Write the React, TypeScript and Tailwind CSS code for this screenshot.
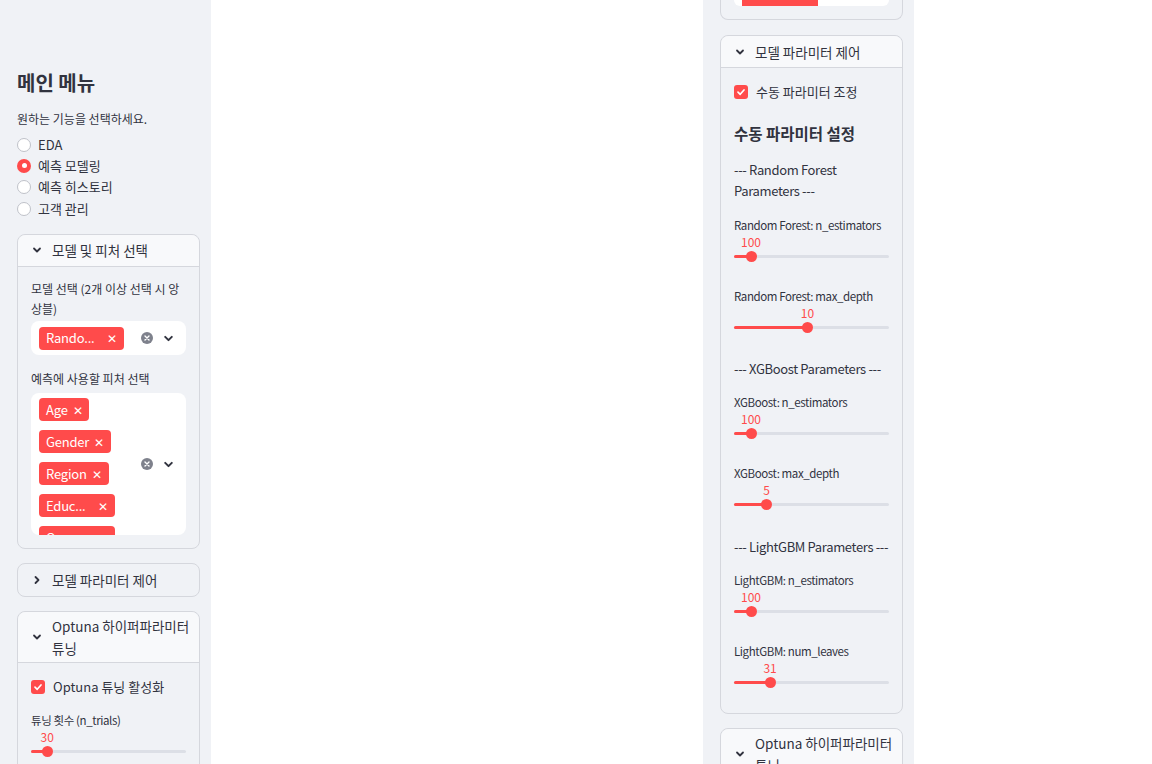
import React from 'react';

const ChevronDown = ({ size = 10 }: { size?: number }) => (
  <svg width={size} height={size} viewBox="0 0 10 10" fill="none">
    <path d="M2 3.5 L5 6.5 L8 3.5" stroke="#31333f" strokeWidth="1.8" strokeLinecap="round" strokeLinejoin="round" />
  </svg>
);

const ChevronRight = () => (
  <svg width={10} height={10} viewBox="0 0 10 10" fill="none">
    <path d="M3.5 2 L6.5 5 L3.5 8" stroke="#31333f" strokeWidth="1.8" strokeLinecap="round" strokeLinejoin="round" />
  </svg>
);

const ClearIcon = () => (
  <svg width={12} height={12} viewBox="0 0 12 12">
    <circle cx="6" cy="6" r="6" fill="#7e818c" />
    <path d="M4 4 L8 8 M8 4 L4 8" stroke="#fff" strokeWidth="1.4" strokeLinecap="round" />
  </svg>
);

const CheckBox = ({ label }: { label: string }) => (
  <div className="flex h-[22px] items-center gap-[8px]">
    <div className="flex h-[14px] w-[14px] items-center justify-center rounded-[3px] bg-[#ff4b4b]">
      <svg width={10} height={10} viewBox="0 0 10 10" fill="none">
        <path d="M2 5.2 L4.2 7.3 L8 3" stroke="#fff" strokeWidth="1.7" strokeLinecap="round" strokeLinejoin="round" />
      </svg>
    </div>
    <span className="text-[13px] leading-[22px]">{label}</span>
  </div>
);

const Tag = ({ text, w }: { text: string; w?: string }) => (
  <div className={`flex h-[23px] shrink-0 items-center justify-between gap-[5px] rounded-[4px] bg-[#ff4b4b] px-[7px] text-[13px] tracking-[-0.2px] text-white ${w ?? ''}`}>
    <span>{text}</span>
    <span className="text-[12px]">✕</span>
  </div>
);

const Slider = ({ label, value, pct }: { label: string; value: number; pct: number }) => (
  <div>
    <div className="whitespace-nowrap text-[11.5px] leading-[18px] tracking-[-0.4px]">{label}</div>
    <div className="relative h-[30px]">
      <span
        className="absolute top-[1px] -translate-x-1/2 text-[12px] leading-[14px] text-[#ff4b4b]"
        style={{ left: `${pct}%` }}
      >
        {value}
      </span>
      <div className="absolute left-0 right-0 top-[21px] h-[3px] rounded-full bg-[#dcdfe6]">
        <div className="h-full rounded-full bg-[#ff4b4b]" style={{ width: `${pct}%` }} />
      </div>
      <div
        className="absolute top-[17px] -ml-[5.5px] h-[11px] w-[11px] rounded-full bg-[#ff4b4b]"
        style={{ left: `${pct}%` }}
      />
    </div>
  </div>
);

const Expander = ({
  title,
  open,
  children,
  className = '',
}: {
  title: React.ReactNode;
  open: boolean;
  children?: React.ReactNode;
  className?: string;
}) => (
  <div className={`w-[183px] rounded-lg border border-[#d5d7dd] ${className}`}>
    <div
      className={`flex min-h-[32px] items-center gap-[10px] py-[3px] pl-[14px] pr-[8px] ${
        open ? 'rounded-t-lg border-b border-[#d5d7dd] bg-[#f8f9fb]' : ''
      }`}
    >
      <div className="shrink-0">{open ? <ChevronDown /> : <ChevronRight />}</div>
      <div className="break-keep text-[13.5px] leading-[22px]">{title}</div>
    </div>
    {open && children}
  </div>
);

const Section = ({ text, className = '' }: { text: string; className?: string }) => (
  <p className={`text-[13px] leading-[21px] tracking-[-0.35px] ${className}`}>{text}</p>
);

const LeftSidebar = () => (
  <div className="h-[764px] w-[211px] shrink-0 overflow-hidden bg-[#f0f2f6] pl-[17px] pt-[69px]">
    <h1 className="text-[20px] font-bold leading-[28px]">메인 메뉴</h1>
    <p className="mt-[13px] text-[12px] leading-[18px]">원하는 기능을 선택하세요.</p>
    <div className="mt-[6px] flex flex-col">
      {['EDA', '예측 모델링', '예측 히스토리', '고객 관리'].map((o, i) => (
        <div key={o} className="flex h-[21.3px] items-center gap-[7px]">
          {i === 1 ? (
            <div className="flex h-[14px] w-[14px] items-center justify-center rounded-full bg-[#ff4b4b]">
              <div className="h-[5px] w-[5px] rounded-full bg-white" />
            </div>
          ) : (
            <div className="h-[14px] w-[14px] rounded-full border border-[#bfc2c9] bg-white" />
          )}
          <span className="text-[13px]">{o}</span>
        </div>
      ))}
    </div>

    <Expander title="모델 및 피처 선택" open className="mt-[14.5px]">
      <div className="px-[13px] pb-[13px] pt-[12.5px]">
        <div className="text-[12px] leading-[19.5px]">모델 선택 (2개 이상 선택 시 앙상블)</div>
        <div className="mt-[3px] flex h-[34px] items-center rounded-lg bg-white pl-[8px] pr-[12px]">
          <div className="flex-1">
            <Tag text="Rando..." w="w-[85px]" />
          </div>
          <div className="flex items-center gap-[10px]">
            <ClearIcon />
            <ChevronDown size={11} />
          </div>
        </div>
        <div className="mt-[13.5px] text-[12px] leading-[19px]">예측에 사용할 피처 선택</div>
        <div className="mt-[5.5px] flex h-[142px] items-center overflow-hidden rounded-lg bg-white pl-[8px] pr-[12px]">
          <div className="flex h-full flex-1 flex-col items-start gap-[9px] pt-[5px]">
            <Tag text="Age" />
            <Tag text="Gender" />
            <Tag text="Region" />
            <Tag text="Educ..." w="w-[76px]" />
            <Tag text="Occu..." w="w-[76px]" />
          </div>
          <div className="flex items-center gap-[10px]">
            <ClearIcon />
            <ChevronDown size={11} />
          </div>
        </div>
      </div>
    </Expander>

    <Expander title="모델 파라미터 제어" open={false} className="mt-[14px]" />

    <Expander title="Optuna 하이퍼파라미터 튜닝" open className="mt-[14px]">
      <div className="px-[13px] pb-[40px] pt-[13px]">
        <CheckBox label="Optuna 튜닝 활성화" />
        <div className="mt-[13px]">
          <Slider label="튜닝 횟수 (n_trials)" value={30} pct={10.5} />
        </div>
      </div>
    </Expander>
  </div>
);

const RightSidebar = () => (
  <div className="ml-[492px] h-[764px] w-[211px] shrink-0 overflow-hidden bg-[#f0f2f6] pl-[17px]">
    <div className="h-[20px] w-[183px] rounded-b-lg border-x border-b border-[#d5d7dd] px-[13px]">
      <div className="h-[6px] overflow-hidden rounded-b-lg bg-white pl-[8px]">
        <div className="h-[6px] w-[76px] bg-[#ff4b4b]" />
      </div>
    </div>

    <Expander title="모델 파라미터 제어" open className="mt-[15px]">
      <div className="px-[13px] pb-[23px] pt-[13px]">
        <CheckBox label="수동 파라미터 조정" />
        <h3 className="mt-[18px] text-[15.5px] font-bold leading-[24px]">수동 파라미터 설정</h3>
        <Section text="--- Random Forest Parameters ---" className="mt-[13.5px]" />
        <div className="mt-[15.5px]">
          <Slider label="Random Forest: n_estimators" value={100} pct={11} />
        </div>
        <div className="mt-[23px]">
          <Slider label="Random Forest: max_depth" value={10} pct={47.4} />
        </div>
        <Section text="--- XGBoost Parameters ---" className="mt-[22.5px] whitespace-nowrap" />
        <div className="mt-[14.5px]">
          <Slider label="XGBoost: n_estimators" value={100} pct={11} />
        </div>
        <div className="mt-[23px]">
          <Slider label="XGBoost: max_depth" value={5} pct={21} />
        </div>
        <Section text="--- LightGBM Parameters ---" className="mt-[23.5px] whitespace-nowrap" />
        <div className="mt-[14.5px]">
          <Slider label="LightGBM: n_estimators" value={100} pct={11} />
        </div>
        <div className="mt-[23px]">
          <Slider label="LightGBM: num_leaves" value={31} pct={23.3} />
        </div>
      </div>
    </Expander>

    <Expander title="Optuna 하이퍼파라미터 튜닝" open className="mt-[14px]" />
  </div>
);

export default function App() {
  return (
    <div className="flex h-[764px] w-[1152px] overflow-hidden bg-white font-['Noto_Sans_CJK_KR','Noto_Sans',sans-serif] text-[#31333f]">
      <LeftSidebar />
      <RightSidebar />
    </div>
  );
}
